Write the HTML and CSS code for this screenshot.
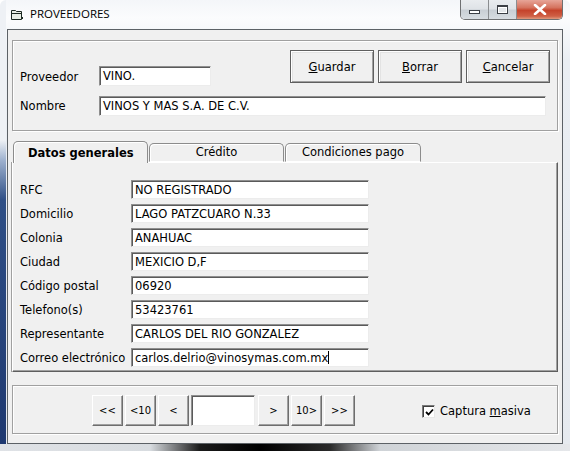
FILE: index.html
```html
<!DOCTYPE html>
<html lang="es">
<head>
<meta charset="utf-8">
<title>PROVEEDORES</title>
<link rel="stylesheet" href="styles.css">
</head>
<body>
<div class="window">
  <div class="titlebar">
    <svg class="app-icon" width="14" height="13" viewBox="0 0 14 13">
      <path d="M1.5 2.5 H5.5 L6.5 3.5 H11.5 V11.5 H1.5 Z" fill="#e9efe6" stroke="#1d2a22" stroke-width="1"/>
      <path d="M1.5 5.5 H11.5" stroke="#1d2a22" stroke-width="1"/>
      <path d="M12 9 L13 10 L12 11" fill="none" stroke="#1d2a22" stroke-width="1"/>
    </svg>
    <span class="title">PROVEEDORES</span>
    <div class="caption-buttons">
      <div class="cb cb-min"><span class="min-glyph"></span></div>
      <div class="cb cb-max"><span class="max-glyph"></span></div>
      <div class="cb cb-close"><svg width="14" height="11" viewBox="0 0 14 11"><path d="M2 1 L12 10 M12 1 L2 10" stroke="#fff" stroke-width="2.6" stroke-linecap="round"/></svg></div>
    </div>
  </div>

  <div class="client">
    <div class="group group-top">
      <div class="top-row1">
        <span class="lbl lbl-prov">Proveedor</span>
        <div class="field field-prov">VINO.</div>
        <div class="btns">
          <button class="btn"><u>G</u>uardar</button>
          <button class="btn"><u>B</u>orrar</button>
          <button class="btn"><u>C</u>ancelar</button>
        </div>
      </div>
      <div class="top-row2">
        <span class="lbl lbl-prov">Nombre</span>
        <div class="field field-nombre">VINOS Y MAS S.A. DE C.V.</div>
      </div>
    </div>

    <div class="tabs">
      <div class="tab tab-active">Datos generales</div>
      <div class="tab">Crédito</div>
      <div class="tab tab-wide">Condiciones pago</div>
    </div>
    <div class="panel">
      <div class="form-grid">
        <span class="lbl">RFC</span><div class="field">NO REGISTRADO</div>
        <span class="lbl">Domicilio</span><div class="field">LAGO PATZCUARO N.33</div>
        <span class="lbl">Colonia</span><div class="field">ANAHUAC</div>
        <span class="lbl">Ciudad</span><div class="field">MEXICIO D,F</div>
        <span class="lbl">Código postal</span><div class="field">06920</div>
        <span class="lbl">Telefono(s)</span><div class="field">53423761</div>
        <span class="lbl">Representante</span><div class="field">CARLOS DEL RIO GONZALEZ</div>
        <span class="lbl">Correo electrónico</span><div class="field">carlos.delrio@vinosymas.com.mx<span class="caret"></span></div>
      </div>
    </div>

    <div class="group group-bottom">
      <div class="nav">
        <button class="nbtn">&lt;&lt;</button>
        <button class="nbtn">&lt;10</button>
        <button class="nbtn">&lt;</button>
        <div class="field nav-field"></div>
        <button class="nbtn nbtn-next">&gt;</button>
        <button class="nbtn">10&gt;</button>
        <button class="nbtn">&gt;&gt;</button>
      </div>
      <label class="check">
        <span class="box"><svg width="9" height="9" viewBox="0 0 9 9"><path d="M1 4 L3.5 6.5 L8 1.5" fill="none" stroke="#000" stroke-width="1.8"/></svg></span>
        <span>Captura <u>m</u>asiva</span>
      </label>
    </div>
  </div>
</div>
</body>
</html>
```

FILE: styles.css
```css
* { box-sizing: border-box; }
html, body { margin: 0; padding: 0; }
body { width: 570px; height: 451px; overflow: hidden; background: #ffffff; }

.window {
  width: 570px;
  height: 451px;
  display: flex;
  flex-direction: column;
  border-radius: 6px 6px 0 0;
  background:
    linear-gradient(to right, #dfe2e6 0, #d8dce0 150px, #1a1a1a 200px, #000 260px, #2a2a2a 330px, #cfd3d7 380px, #e5e7ea 100%) left bottom / 100% 7px no-repeat,
    linear-gradient(to bottom, #eef1f5 0, #eef1f5 140px, #9fb2cf 160px, #2f4f86 200px, #1e3870 100%) left top / 6px 100% no-repeat,
    linear-gradient(to bottom, #f4f6f9 0, #fbfcfd 18px, #eaeef3 60px, #e6eaef 100%);
  font-family: "DejaVu Sans", Verdana, sans-serif;
  font-size: 11.5px;
  color: #000;
}

.titlebar {
  height: 29px;
  display: flex;
  align-items: flex-start;
  padding-left: 10px;
}
.app-icon { margin-top: 8px; flex: none; }
.title {
  margin-left: 6px;
  margin-top: 6px;
  font-family: "Open Sans", "Noto Sans", sans-serif;
  font-size: 11.5px;
  color: #000;
}
.caption-buttons {
  margin-left: auto;
  margin-right: 7px;
  display: flex;
  height: 20px;
  border: 1px solid #6e7072;
  border-top: none;
  border-radius: 0 0 5px 5px;
  overflow: hidden;
  box-shadow: 0 1px 0 rgba(255,255,255,0.8);
}
.cb {
  height: 19px;
  display: flex;
  align-items: center;
  justify-content: center;
}
.cb-min, .cb-max {
  width: 28px;
  border-right: 1px solid #8a8d90;
  background: linear-gradient(to bottom, #e9ecef 0, #dfe3e7 45%, #c9cfd5 55%, #d7dce1 100%);
}
.cb-close {
  width: 45px;
  background: linear-gradient(to bottom, #e7a598 0, #d5735f 40%, #c5432b 55%, #cf5f45 85%, #e09a7e 100%);
}
.min-glyph {
  width: 11px; height: 4px; margin-top: 5px;
  border: 1px solid #3b3f45;
  background: #fff;
}
.max-glyph {
  width: 11px; height: 9px;
  border: 1px solid #3b3f45;
  border-top-width: 2px;
  background: #e4e7ea;
  box-shadow: inset 0 0 0 1px #fff;
}

.client {
  flex: 1;
  margin: 0 7px 7px 7px;
  border: 1px solid #5c6166;
  background: #f0f0f0;
  padding: 10px 4px 0 4px;
  display: flex;
  flex-direction: column;
}

.group {
  border: 1px solid #a0a0a0;
  box-shadow: inset 1px 1px 0 #fff, 1px 1px 0 #fff;
}

.group-top {
  height: 91px;
  padding: 9px 7px 0 7px;
  display: flex;
  flex-direction: column;
}
.top-row1 { display: flex; align-items: flex-start; height: 36px; }
.top-row2 { display: flex; align-items: center; margin-top: 10px; }
.lbl-prov { width: 79px; flex: none; }
.top-row1 .lbl-prov { margin-top: 17px; }

.lbl { white-space: nowrap; line-height: 19px; padding-top: 1px; }

.field {
  height: 20px;
  background: #fff;
  border-style: solid;
  border-width: 1px;
  border-color: #8f8f8f #ececec #ececec #8f8f8f;
  box-shadow: inset 1px 1px 0 #5a5a5a;
  padding: 2px 0 0 3px;
  white-space: nowrap;
  overflow: hidden;
  line-height: 15px;
}
.field-prov { width: 112px; margin-top: 16px; }
.field-nombre { width: 447px; }

.btns { margin-left: auto; display: flex; gap: 4px; }
.btn {
  width: 84px;
  height: 33px;
  font-family: "DejaVu Sans", Verdana, sans-serif;
  font-size: 11.5px;
  color: #000;
  background: #f0f0f0;
  border: 1px solid #5f5f5f;
  box-shadow: inset 1px 1px 0 #fff, inset -1px -1px 0 #a0a0a0, inset 2px 2px 0 #e3e3e3;
  padding: 0;
}

.tabs {
  display: flex;
  align-items: flex-end;
  gap: 1px;
  margin-top: 10px;
  padding-left: 1px;
  height: 21px;
  position: relative;
  z-index: 1;
}
.tab {
  width: 135px;
  height: 19px;
  border: 1px solid #8c8c8c;
  border-bottom: 1px solid #fff;
  border-radius: 5px 5px 0 0;
  background: #f0f0f0;
  box-shadow: inset 1px 1px 0 #fff;
  text-align: center;
  line-height: 17px;
}
.tab-wide { width: 136px; }
.tab-active {
  height: 22px;
  margin-bottom: -1px;
  border-bottom: none;
  font-weight: bold;
  line-height: 22px;
  text-align: left;
  padding-left: 14px;
}

.panel {
  height: 210px;
  border: 1px solid;
  border-color: #fff #5e5e5e #5e5e5e #fff;
  box-shadow: -1px 0 0 #a0a0a0, inset -1px -1px 0 #a0a0a0;
  padding: 17px 0 0 7px;
}
.form-grid {
  display: grid;
  grid-template-columns: 111px 238px;
  grid-auto-rows: 19px;
  row-gap: 5px;
  align-items: center;
}
.form-grid .field { height: 19px; padding-top: 2px; }
.caret {
  display: inline-block;
  width: 1px;
  height: 13px;
  background: #000;
  vertical-align: -2px;
}

.group-bottom {
  margin-top: 13px;
  height: 49px;
  padding: 9px 0 0 79px;
  display: flex;
  align-items: flex-start;
}
.nav { display: flex; gap: 2px; align-items: flex-start; }
.nbtn {
  width: 31px;
  height: 31px;
  padding: 0;
  font-family: "DejaVu Sans", Verdana, sans-serif;
  font-size: 10px;
  color: #000;
  background: #f0f0f0;
  border: 1px solid;
  border-color: #fff #6e6e6e #6e6e6e #fff;
  box-shadow: inset -1px -1px 0 #a0a0a0;
}
.nav-field { width: 64px; height: 31px; margin-right: 1px; }
.check {
  margin-left: 67px;
  margin-top: 10px;
  display: flex;
  align-items: center;
  gap: 5px;
  line-height: 13px;
}
.box {
  width: 13px;
  height: 13px;
  background: #fff;
  border: 1px solid;
  border-color: #7a7a7a #e8e8e8 #e8e8e8 #7a7a7a;
  box-shadow: inset 1px 1px 0 #404040;
  display: flex;
  align-items: center;
  justify-content: center;
  padding: 1px 0 0 1px;
}
```
